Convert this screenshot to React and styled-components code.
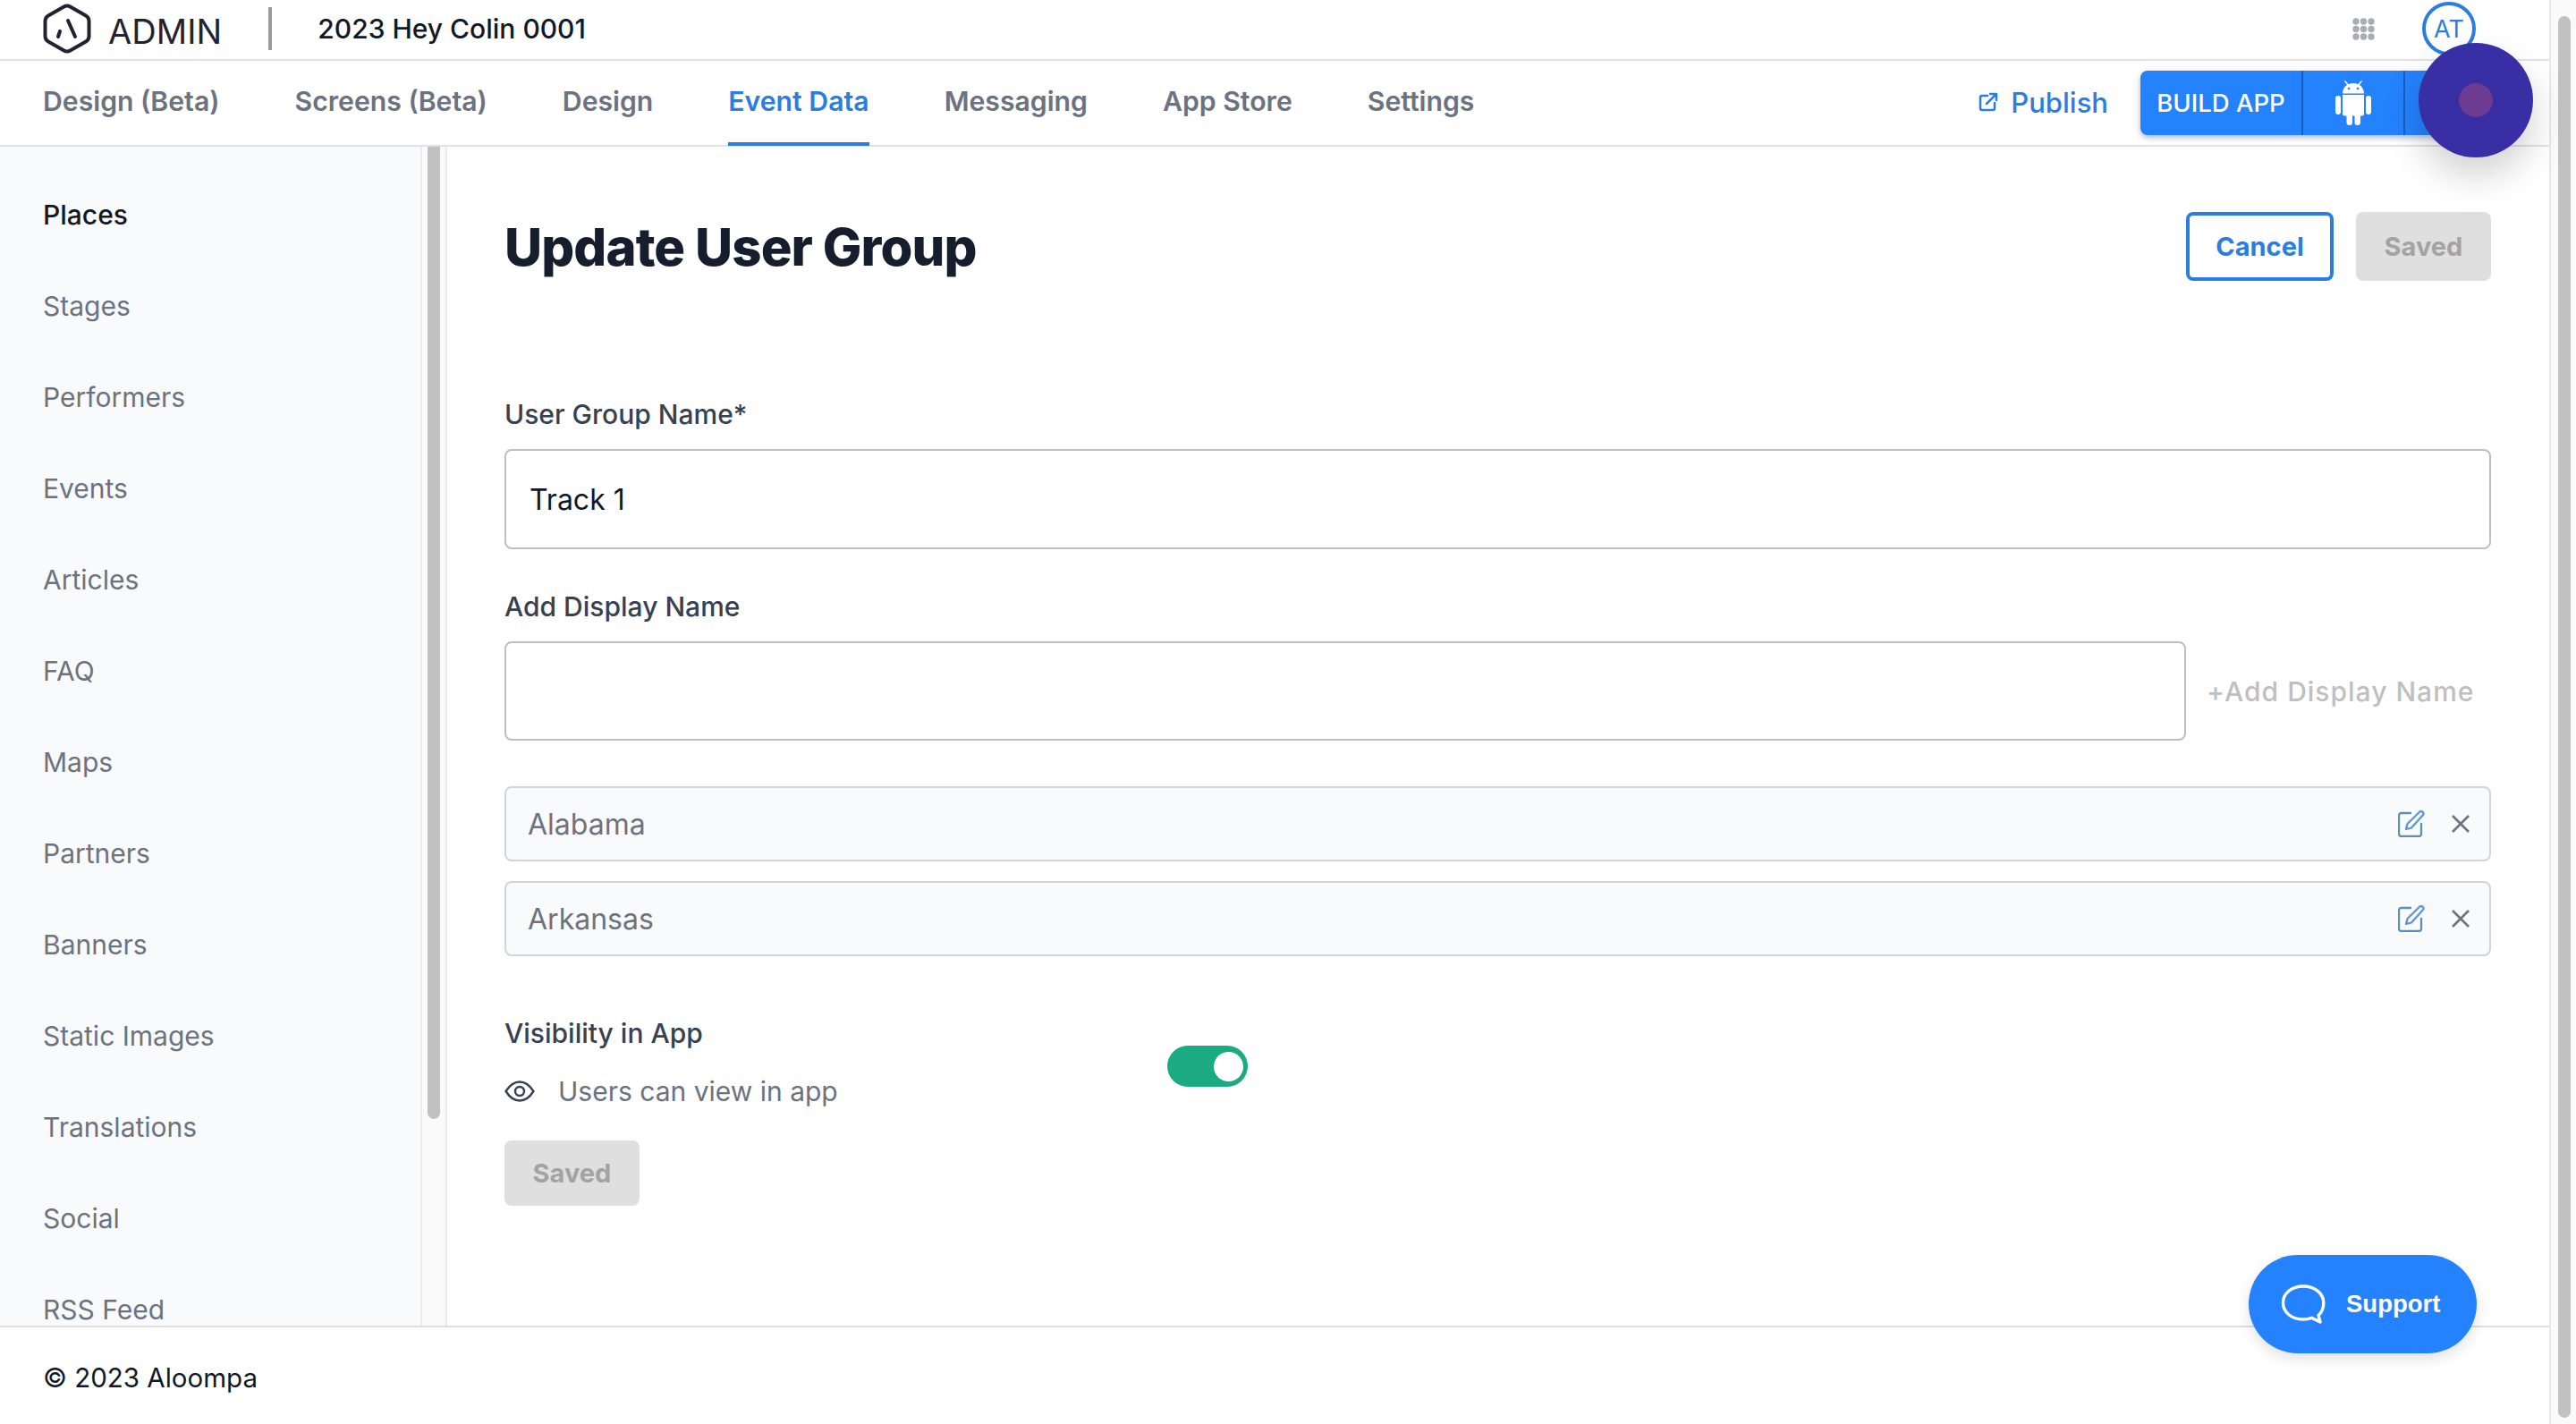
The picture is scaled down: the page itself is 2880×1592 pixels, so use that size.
import styled, { createGlobalStyle } from "styled-components";

const GlobalStyle = createGlobalStyle`
  html, body {
    margin: 0;
    padding: 0;
    background: #fff;
    overflow: hidden;
  }
  * {
    box-sizing: border-box;
  }
  body {
    font-family: Inter, "Liberation Sans", sans-serif;
  }
`;

const Page = styled.div`
  position: relative;
  display: flex;
  width: 2880px;
  height: 1592px;
  overflow: hidden;
`;

const Main = styled.div`
  display: flex;
  flex-direction: column;
  width: 2850px;
`;

const PageTrack = styled.div`
  width: 30px;
  padding: 18px 6px 7px 8px;
  background: #fafafa;
  border-left: 2px solid #e8e8e8;
`;

const Thumb = styled.div`
  height: 100%;
  background: #c1c1c1;
  border-radius: 8px;
`;

const TopBar = styled.header`
  display: flex;
  align-items: center;
  flex: 0 0 68px;
  padding: 0 0 2px 48px;
  border-bottom: 2px solid #e2e2e6;
`;

const Logo = styled.div`
  display: flex;
  align-items: center;
  gap: 19px;
`;

const LogoText = styled.span`
  font-size: 38px;
  line-height: 54px;
  letter-spacing: 0.1px;
  color: #1f2430;
  position: relative;
  top: 3px;
`;

const Divider = styled.span`
  width: 4px;
  height: 48px;
  margin: 0 51px 0 52px;
  background: #9b9b9b;
`;

const EventName = styled.span`
  font-size: 30px;
  font-weight: 500;
  color: #111827;
`;

const TopRight = styled.div`
  display: flex;
  align-items: center;
  margin-left: auto;
  gap: 53px;
  padding-right: 82px;
`;

const Avatar = styled.div`
  display: flex;
  align-items: center;
  justify-content: center;
  width: 60px;
  height: 60px;
  border: 4px solid #2a7de1;
  border-radius: 50%;
  font-size: 27px;
  color: #2a7de1;
`;

const NavBar = styled.nav`
  display: flex;
  align-items: flex-start;
  flex: 0 0 96px;
  height: 96px;
  padding-left: 48px;
  border-bottom: 2px solid #e2e2e6;
`;

const Tabs = styled.div`
  display: flex;
  gap: 84px;
`;

const Tab = styled.a`
  display: flex;
  align-items: center;
  height: 95px;
  padding-bottom: 2px;
  font-size: 30.2px;
  font-weight: 600;
  color: ${(p) => (p.$active ? "#2a7de1" : "#6b7280")};
  border-bottom: 4px solid ${(p) => (p.$active ? "#2a7de1" : "transparent")};
`;

const NavRight = styled.div`
  display: flex;
  align-items: center;
  height: 94px;
  margin-left: auto;
  padding-right: 65px;
`;

const PublishLink = styled.a`
  display: flex;
  align-items: center;
  gap: 14px;
  margin-right: 36px;
  padding-bottom: 2px;
  font-size: 31px;
  font-weight: 500;
  color: #2a7de1;
`;

const BuildGroup = styled.div`
  display: flex;
  height: 72px;
  width: 392px;
  border-radius: 8px;
  background: #2482fd;
  box-shadow: 0 3px 6px rgba(30, 60, 110, 0.35);
  color: #fff;
`;

const BuildLabel = styled.div`
  display: flex;
  align-items: center;
  justify-content: center;
  flex: 0 0 182px;
  border-right: 2px solid #1460bd;
  font-size: 27.5px;
  font-weight: 500;
`;

const BuildIcon = styled.div`
  display: flex;
  align-items: center;
  justify-content: center;
  flex: 0 0 114px;
  border-right: 2px solid #1460bd;
`;

const Body = styled.div`
  display: flex;
  flex: 1;
  min-height: 0;
`;

const Sidebar = styled.aside`
  display: flex;
  flex: 0 0 500px;
  overflow: hidden;
`;

const SideList = styled.ul`
  flex: 0 0 472px;
  margin: 0;
  padding: 25px 0 0 48px;
  list-style: none;
  background: #f9fafb;
  border-right: 2px solid #ebebeb;
  overflow: hidden;
`;

const SideItem = styled.li`
  height: 102px;
  line-height: 102px;
  font-size: 30px;
  font-weight: ${(p) => (p.$active ? 500 : 400)};
  color: ${(p) => (p.$active ? "#111827" : "#6b7280")};
`;

const SideTrack = styled.div`
  flex: 0 0 28px;
  padding: 0 6px;
  background: #fafafa;
  border-right: 2px solid #ebebeb;
`;

const SideThumb = styled.div`
  height: 1087px;
  background: #c1c1c1;
  border-radius: 0 0 8px 8px;
`;

const Content = styled.main`
  flex: 1;
  min-width: 0;
  padding: 73px 65px 0 64px;
`;

const TitleRow = styled.div`
  display: flex;
  align-items: center;
  justify-content: space-between;
  height: 77px;
  margin-bottom: 131px;
`;

const Title = styled.h1`
  margin: 0;
  font-size: 58px;
  font-weight: 800;
  letter-spacing: -0.9px;
  color: #161e2e;
`;

const Actions = styled.div`
  display: flex;
  gap: 25px;
`;

const OutlineButton = styled.button`
  width: 165px;
  height: 77px;
  background: #fff;
  border: 4px solid #2a7de1;
  border-radius: 8px;
  font-family: inherit;
  font-size: 29px;
  font-weight: 700;
  color: #2a7de1;
`;

const SavedButton = styled.button`
  width: 151px;
  height: ${(p) => p.$height || 77}px;
  background: #dfdfdf;
  border: 0;
  border-radius: 8px;
  font-family: inherit;
  font-size: 29px;
  font-weight: 700;
  color: #a3a3a3;
`;

const Label = styled.label`
  display: block;
  margin-bottom: 21px;
  font-size: 30px;
  line-height: 36px;
  font-weight: 500;
  color: #374151;
`;

const TextInput = styled.div`
  display: flex;
  align-items: center;
  height: ${(p) => p.$height}px;
  padding-left: 26px;
  background: #fff;
  border: 2px solid #bdbfc4;
  border-radius: 8px;
  font-size: 32px;
  color: #111827;
`;

const Field = styled.div`
  margin-bottom: ${(p) => p.$gap}px;
`;

const DisplayRow = styled.div`
  display: flex;
  align-items: center;
  margin-bottom: 51px;
`;

const DisplayInput = styled(TextInput)`
  flex: 0 0 1880px;
`;

const AddLink = styled.span`
  margin-left: 23px;
  font-size: 30px;
  font-weight: 500;
  letter-spacing: 1px;
  white-space: nowrap;
  color: #bfbfbf;
`;

const NameRow = styled.div`
  display: flex;
  align-items: center;
  height: 84px;
  margin-bottom: 22px;
  padding: 0 22px 0 24px;
  background: #f9fafb;
  border: 2px solid #d1d5db;
  border-radius: 8px;
  font-size: 32px;
  color: #6b7280;
`;

const RowIcons = styled.div`
  display: flex;
  align-items: center;
  gap: 30px;
  margin-left: auto;
`;

const VisibilityRow = styled.div`
  display: flex;
  align-items: flex-start;
  margin-top: 68px;
`;

const VisibilityText = styled.div`
  flex: 0 0 741px;
`;

const VisibilityLabel = styled.div`
  font-size: 30px;
  line-height: 36px;
  font-weight: 500;
  color: #374151;
`;

const VisibilityHint = styled.div`
  display: flex;
  align-items: center;
  gap: 26px;
  margin-top: 29px;
  font-size: 30px;
  line-height: 36px;
  color: #6b7280;
`;

const Toggle = styled.div`
  display: flex;
  align-items: center;
  justify-content: flex-end;
  width: 90px;
  height: 46px;
  margin-top: 32px;
  padding-right: 5px;
  background: #1aab82;
  border-radius: 23px;
`;

const Knob = styled.span`
  width: 33px;
  height: 33px;
  background: #fff;
  border-radius: 50%;
`;

const BottomSave = styled.div`
  margin-top: 37px;
`;

const Footer = styled.footer`
  display: flex;
  align-items: center;
  flex: 0 0 110px;
  padding: 4px 0 0 48px;
  border-top: 2px solid #dedede;
  font-size: 29.5px;
  color: #111827;
`;

const RecordBubble = styled.div`
  position: absolute;
  left: 2704px;
  top: 48px;
  display: flex;
  align-items: center;
  justify-content: center;
  width: 128px;
  height: 128px;
  background: #372fa3;
  border-radius: 50%;
  box-shadow: 0 20px 40px rgba(0, 0, 0, 0.18);
`;

const RecordDot = styled.span`
  width: 38px;
  height: 38px;
  background: #6d3a94;
  border-radius: 50%;
`;

const SupportButton = styled.button`
  position: absolute;
  left: 2514px;
  top: 1403px;
  display: flex;
  align-items: center;
  gap: 23px;
  width: 255px;
  height: 110px;
  padding: 0 0 0 36px;
  background: #2582ff;
  border: 0;
  border-radius: 55px;
  box-shadow: 0 6px 16px rgba(0, 0, 0, 0.12);
  font-family: "Liberation Sans", Arial, sans-serif;
  font-size: 27.5px;
  font-weight: 700;
  color: #fff;
`;

const HexLogo = () => (
  <svg width="54" height="56" viewBox="0 0 54 56" fill="none" stroke="#1f2430" strokeLinecap="round" strokeLinejoin="round">
    <path strokeWidth="4" d="M23.5 3.5a7 7 0 0 1 7 0l17.500 10a7 7 0 0 1 3.500 6v17a7 7 0 0 1-3.500 6l-17.500 10a7 7 0 0 1-7 0L6 42.500a7 7 0 0 1-3.500-6v-17a7 7 0 0 1 3.500-6z" />
    <path strokeWidth="4" d="M28 19l8 18M19 31l-2 6" />
  </svg>
);

const AppsIcon = () => (
  <svg width="25" height="25" viewBox="0 0 25 25" fill="#a9acb5">
    {[4, 12.5, 21].map((y) =>
      [4, 12.5, 21].map((x) => <circle key={`${x}-${y}`} cx={x} cy={y} r="3.700" />)
    )}
  </svg>
);

const PublishIcon = () => (
  <svg width="22" height="22" viewBox="0 0 22 22" fill="none" stroke="#2a7de1" strokeWidth="2.500" strokeLinecap="round" strokeLinejoin="round">
    <path d="M10 4H4a2 2 0 0 0-2 2v12a2 2 0 0 0 2 2h12a2 2 0 0 0 2-2v-6" />
    <path d="M9 13L20 2M13 2h7v7" />
  </svg>
);

const AndroidIcon = () => (
  <svg width="40" height="50" viewBox="0 0 40 50" fill="#fff">
    <rect x="0" y="17" width="6" height="21" rx="3" />
    <rect x="34" y="17" width="6" height="21" rx="3" />
    <path d="M8 14.500C8 8 13 3 20 3s12 5 12 11.500z" />
    <path stroke="#fff" strokeWidth="1.600" strokeLinecap="round" d="M11 1l3.500 4.500M29 1l-3.500 4.500" />
    <circle cx="15" cy="9" r="1.300" fill="#2482fd" />
    <circle cx="25" cy="9" r="1.300" fill="#2482fd" />
    <path d="M8 16h24v21a2.500 2.500 0 0 1-2.500 2.500h-19A2.500 2.500 0 0 1 8 37z" />
    <rect x="12.500" y="34" width="6.500" height="16" rx="3.200" />
    <rect x="21.500" y="34" width="6.500" height="16" rx="3.200" />
  </svg>
);

const EditIcon = () => (
  <svg width="30" height="30" viewBox="0 0 30 30" fill="none" strokeLinecap="round" strokeLinejoin="round">
    <path stroke="#5a8fb8" strokeWidth="2.300" d="M14 3H3.500A2.500 2.500 0 0 0 1 5.500v21A2.500 2.500 0 0 0 3.500 29h20a2.500 2.500 0 0 0 2.500-2.500V15" />
    <path stroke="#5b96d6" strokeWidth="2.300" d="M9 21l1.500-6L24 1.800a2.500 2.500 0 0 1 3.600 0 2.500 2.500 0 0 1 .2 3.500L15 19.500z" />
  </svg>
);

const CloseIcon = () => (
  <svg width="20" height="20" viewBox="0 0 20 20" fill="none" stroke="#6b7280" strokeWidth="2.600">
    <path d="M1 1l18 18M19 1L1 19" />
  </svg>
);

const EyeIcon = () => (
  <svg width="34" height="24" viewBox="0 0 34 24" fill="none" stroke="#374151" strokeWidth="2.400" strokeLinejoin="round">
    <path d="M1.500 12C6 5 10.500 1.500 17 1.500S28 5 32.500 12C28 19 23.500 22.500 17 22.500S6 19 1.500 12z" />
    <circle cx="17" cy="12" r="5" />
  </svg>
);

const ChatIcon = () => (
  <svg width="50" height="44" viewBox="0 0 50 44" fill="none" stroke="#fff" strokeWidth="3.400" strokeLinejoin="round">
    <path d="M25 2C12 2 2.500 10 2.500 20.500S12 39 25 39c3.500 0 7-.7 9.500-1.700L44 42l-2-7.500c3.800-3.400 5.800-8.500 5.800-14C47.800 10 38 2 25 2z" />
  </svg>
);

const sideItems = [
  "Stages",
  "Performers",
  "Events",
  "Articles",
  "FAQ",
  "Maps",
  "Partners",
  "Banners",
  "Static Images",
  "Translations",
  "Social",
  "RSS Feed",
];

const tabs = [
  "Design (Beta)",
  "Screens (Beta)",
  "Design",
  "Event Data",
  "Messaging",
  "App Store",
  "Settings",
];

const names = ["Alabama", "Arkansas"];

export default function App() {
  return (
    <Page>
      <GlobalStyle />
      <Main>
        <TopBar>
          <Logo>
            <HexLogo />
            <LogoText>ADMIN</LogoText>
          </Logo>
          <Divider />
          <EventName>2023 Hey Colin 0001</EventName>
          <TopRight>
            <AppsIcon />
            <Avatar>AT</Avatar>
          </TopRight>
        </TopBar>
        <NavBar>
          <Tabs>
            {tabs.map((tab) => (
              <Tab key={tab} $active={tab === "Event Data"}>
                {tab}
              </Tab>
            ))}
          </Tabs>
          <NavRight>
            <PublishLink>
              <PublishIcon />
              Publish
            </PublishLink>
            <BuildGroup>
              <BuildLabel>BUILD APP</BuildLabel>
              <BuildIcon>
                <AndroidIcon />
              </BuildIcon>
            </BuildGroup>
          </NavRight>
        </NavBar>
        <Body>
          <Sidebar>
            <SideList>
              <SideItem $active>Places</SideItem>
              {sideItems.map((item) => (
                <SideItem key={item}>{item}</SideItem>
              ))}
            </SideList>
            <SideTrack>
              <SideThumb />
            </SideTrack>
          </Sidebar>
          <Content>
            <TitleRow>
              <Title>Update User Group</Title>
              <Actions>
                <OutlineButton>Cancel</OutlineButton>
                <SavedButton>Saved</SavedButton>
              </Actions>
            </TitleRow>
            <Field $gap={46}>
              <Label>User Group Name*</Label>
              <TextInput $height={112}>Track 1</TextInput>
            </Field>
            <Label>Add Display Name</Label>
            <DisplayRow>
              <DisplayInput $height={111} />
              <AddLink>+Add Display Name</AddLink>
            </DisplayRow>
            {names.map((name) => (
              <NameRow key={name}>
                {name}
                <RowIcons>
                  <EditIcon />
                  <CloseIcon />
                </RowIcons>
              </NameRow>
            ))}
            <VisibilityRow>
              <VisibilityText>
                <VisibilityLabel>Visibility in App</VisibilityLabel>
                <VisibilityHint>
                  <EyeIcon />
                  Users can view in app
                </VisibilityHint>
              </VisibilityText>
              <Toggle>
                <Knob />
              </Toggle>
            </VisibilityRow>
            <BottomSave>
              <SavedButton $height={73}>Saved</SavedButton>
            </BottomSave>
          </Content>
        </Body>
        <Footer>© 2023 Aloompa</Footer>
      </Main>
      <PageTrack>
        <Thumb />
      </PageTrack>
      <RecordBubble>
        <RecordDot />
      </RecordBubble>
      <SupportButton>
        <ChatIcon />
        Support
      </SupportButton>
    </Page>
  );
}
